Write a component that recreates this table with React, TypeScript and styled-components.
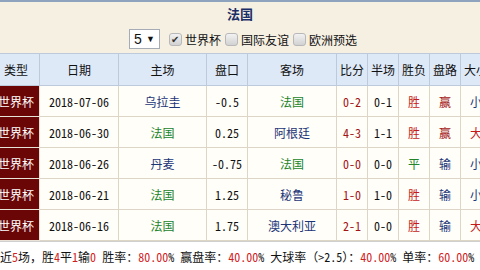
import styled, { createGlobalStyle } from "styled-components";

const GlobalStyle = createGlobalStyle`
  html, body {
    margin: 0;
    padding: 0;
    width: 480px;
    height: 270px;
    overflow: hidden;
    background: #ffffff;
  }
  body {
    font-family: "Noto Sans Mono CJK SC", "Noto Sans CJK SC", sans-serif;
    font-size: 12px;
  }
`;

type Tone = "navy" | "green" | "red" | "dark" | "black";

const colors: Record<Tone, string> = {
  navy: "#1c3577",
  green: "#22842a",
  red: "#c41a1a",
  dark: "#a31515",
  black: "#111111",
};

const rows = [
  { date: "2018-07-06", home: "乌拉圭", hc: "-0.5", away: "法国", score: "0-2", half: "0-1", res: "胜", pan: "赢", size: "小" },
  { date: "2018-06-30", home: "法国", hc: "0.25", away: "阿根廷", score: "4-3", half: "1-1", res: "胜", pan: "赢", size: "大" },
  { date: "2018-06-26", home: "丹麦", hc: "-0.75", away: "法国", score: "0-0", half: "0-0", res: "平", pan: "输", size: "小" },
  { date: "2018-06-21", home: "法国", hc: "1.25", away: "秘鲁", score: "1-0", half: "1-0", res: "胜", pan: "输", size: "小" },
  { date: "2018-06-16", home: "法国", hc: "1.75", away: "澳大利亚", score: "2-1", half: "0-0", res: "胜", pan: "输", size: "大" },
];

const teamTone = (name: string): Tone => (name === "法国" ? "green" : "navy");
const resTone = (r: string): Tone => (r === "胜" ? "red" : r === "平" ? "green" : "navy");
const panTone = (p: string): Tone => (p === "赢" ? "dark" : "navy");
const sizeTone = (s: string): Tone => (s === "大" ? "red" : "navy");

const widths = [47, 79, 88, 41, 89, 31, 31, 31, 31, 31, 36];

const App = () => {
  return (
    <Page>
      <GlobalStyle />
      <Top>
        <Title>法国</Title>
        <Filters>
          <Select>
            <span>5</span>
            <Arrow>▼</Arrow>
          </Select>
          <Option>
            <Box $checked>✔</Box>世界杯
          </Option>
          <Option>
            <Box />国际友谊
          </Option>
          <Option>
            <Box />欧洲预选
          </Option>
        </Filters>
      </Top>
      <TableWrap>
        <Table>
          <colgroup>
            {widths.map((w, i) => (
              <col key={i} style={{ width: w }} />
            ))}
          </colgroup>
          <thead>
            <tr>
              {["类型", "日期", "主场", "盘口", "客场", "比分", "半场", "胜负", "盘路", "大小", "单双"].map((h) => (
                <Th key={h}>{h}</Th>
              ))}
            </tr>
          </thead>
          <tbody>
            {rows.map((r) => (
              <tr key={r.date}>
                <TypeCell>世界杯</TypeCell>
                <Td $tone="black">{r.date}</Td>
                <Td $tone={teamTone(r.home)}>{r.home}</Td>
                <Td $tone="black">{r.hc}</Td>
                <Td $tone={teamTone(r.away)}>{r.away}</Td>
                <Td $tone="dark">{r.score}</Td>
                <Td $tone="black">{r.half}</Td>
                <Td $tone={resTone(r.res)}>{r.res}</Td>
                <Td $tone={panTone(r.pan)}>{r.pan}</Td>
                <Td $tone={sizeTone(r.size)}>{r.size}</Td>
                <Td $tone="navy">单</Td>
              </tr>
            ))}
          </tbody>
        </Table>
      </TableWrap>
      <Footer>
        近<Num>5</Num>场，胜<Num>4</Num>平<Num>1</Num>输<Num>0</Num> 胜率：<Num>80.00</Num>% 赢盘率：
        <Num>40.00</Num>% 大球率（&gt;2.5）：<Num>40.00</Num>% 单率：<Num>60.00</Num>%
      </Footer>
    </Page>
  );
};

const Page = styled.div`
  width: 480px;
  height: 270px;
  overflow: hidden;
  background: #ffffff;
`;

const Top = styled.div`
  border-top: 2px solid #8ea3bd;
  background: #f6f0e3;
  display: flex;
  flex-direction: column;
  align-items: center;
`;

const Title = styled.div`
  height: 25px;
  line-height: 24px;
  font-family: "Noto Sans CJK SC", sans-serif;
  font-weight: 700;
  font-size: 13px;
  color: #1b2d66;
`;

const Filters = styled.div`
  height: 26px;
  display: flex;
  align-items: center;
  gap: 4px;
  padding-left: 6px;
  padding-bottom: 2px;
  box-sizing: border-box;
  color: #111;
`;

const Select = styled.div`
  width: 31px;
  height: 20px;
  box-sizing: border-box;
  border: 1px solid #a5acb5;
  background: #fff;
  display: flex;
  align-items: center;
  justify-content: space-between;
  padding: 0 4px 0 4px;
  margin-right: 5px;
  font-family: "Liberation Sans", sans-serif;
  font-size: 14px;
`;

const Arrow = styled.span`
  font-size: 9px;
`;

const Option = styled.label`
  display: flex;
  align-items: center;
  gap: 3px;
  font-family: "Noto Sans CJK SC", sans-serif;
  font-size: 12px;
`;

const Box = styled.span<{ $checked?: boolean }>`
  width: 11px;
  height: 11px;
  border: 1px solid #b8b8b8;
  border-radius: 3px;
  background: linear-gradient(#f2f2f2, #d2d2d2);
  display: flex;
  align-items: center;
  justify-content: center;
  font-size: 10px;
  line-height: 1;
  color: #333;
`;

const TableWrap = styled.div`
  overflow: hidden;
  width: 480px;
`;

const Table = styled.table`
  margin-left: -8px;
  border-collapse: collapse;
  table-layout: fixed;
  width: 535px;
`;

const Th = styled.th`
  height: 31px;
  padding: 0;
  background: #dee9f8;
  border: 1px solid #bccadc;
  font-family: "Noto Sans CJK SC", sans-serif;
  font-weight: 400;
  font-size: 12px;
  color: #111;
  white-space: nowrap;
  overflow: hidden;
`;

const Td = styled.td<{ $tone: Tone }>`
  height: 30px;
  padding: 0;
  text-align: center;
  background: #fffef9;
  border: 1px solid #ddd5c6;
  color: ${(p) => colors[p.$tone]};
  white-space: nowrap;
  overflow: hidden;
`;

const TypeCell = styled.td`
  height: 30px;
  padding: 0;
  text-align: center;
  background: #6a0606;
  border: 1px solid #e9e2d6;
  color: #ffffff;
  font-family: "Noto Sans CJK SC", sans-serif;
  white-space: nowrap;
`;

const Footer = styled.div`
  border-top: 1px solid #cfcfcf;
  height: 30px;
  line-height: 30px;
  white-space: nowrap;
  color: #111;
`;

const Num = styled.span`
  color: #d21e1e;
`;

export default App;
